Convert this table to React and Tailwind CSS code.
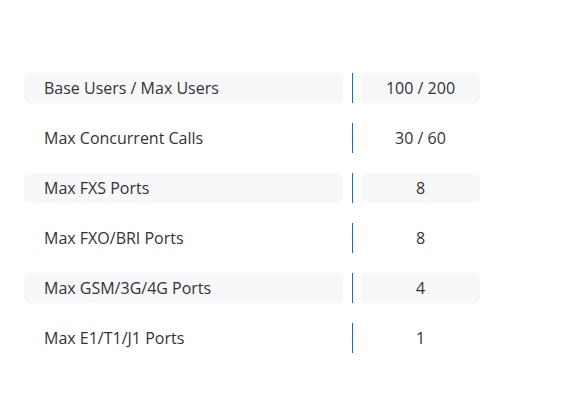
import React from 'react';

const specs = [
    { label: "Base Users / Max Users", value: "100 / 200" },
    { label: "Max Concurrent Calls", value: "30 / 60" },
    { label: "Max FXS Ports", value: "8" },
    { label: "Max FXO/BRI Ports", value: "8" },
    { label: "Max GSM/3G/4G Ports", value: "4" },
    { label: "Max E1/T1/J1 Ports", value: "1" },
];

const App = () => {
    return (
        <div className="w-[579px] h-[401px] bg-white pt-[73px] pl-[24px]" style={{ fontFamily: '"Open Sans", sans-serif' }}>
            <div className="flex flex-col gap-[20px]">
                {specs.map((row, i) => (
                    <div key={row.label} className="flex items-stretch h-[30px]">
                        <div className={`w-[319px] rounded-md flex items-center pl-[20px] text-[16px] text-[#333333] ${i % 2 === 0 ? 'bg-[#f7f8fa]' : ''}`}>
                            {row.label}
                        </div>
                        <div className="w-px bg-[#0b6fdb] ml-[9px] mr-[8px]" />
                        <div className={`w-[119px] rounded-md flex items-center justify-center text-[16px] text-[#333333] ${i % 2 === 0 ? 'bg-[#f7f8fa]' : ''}`}>
                            {row.value}
                        </div>
                    </div>
                ))}
            </div>
        </div>
    )
}

export default App;
